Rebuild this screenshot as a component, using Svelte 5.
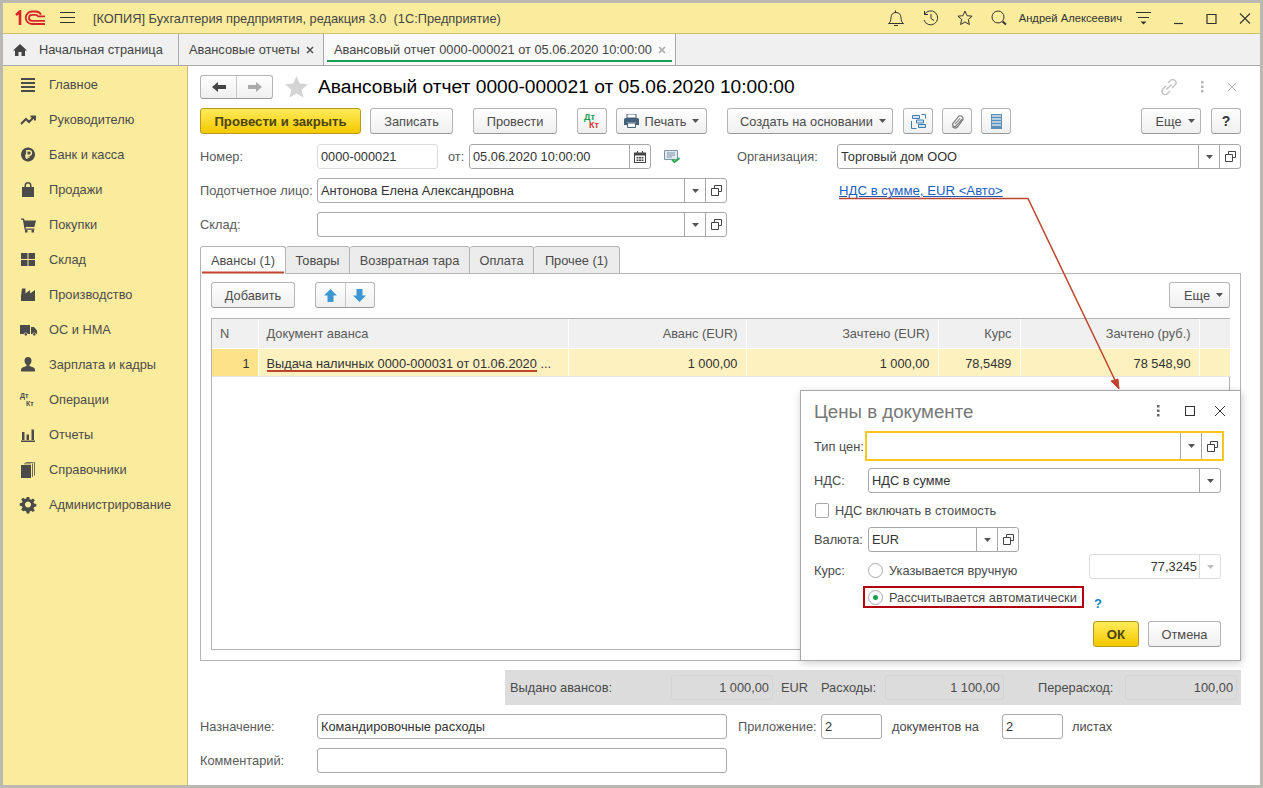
<script>
	const menu = [
		{ name: "Главное", d: "M0 1h14v2H0zM0 5h14v2H0zM0 9h14v2H0zM0 13h14v2H0z" },
		{ name: "Руководителю", s: "M0 12l5-5 3 3 5-5M9.500 4.500h4.500v4" },
		{ name: "Банк и касса", d: "M7 0.500a7 7 0 1 0 .01 0z", y: "M5.800 12V3.800h2.400a2.100 2.100 0 0 1 0 4.400H4.200M4.200 10h4.400" },
		{ name: "Продажи", d: "M1 5h2.500V3.500a3.500 3.500 0 0 1 7 0V5H13v10H1zM5 5h4V3.500a2 2 0 0 0-4 0z" },
		{ name: "Покупки", d: "M0 1.500h3l.6 2H15l-1.600 6.500H4.500l.3 1.500h8.700v1.200H3.600L1.900 2.800H0zM4 13h2.500v2.500H4zM10.500 13H13v2.500h-2.500z" },
		{ name: "Склад", d: "M0 1h6.500v6H0zM7.500 1H14v6H7.500zM0 8h6.500v6H0zM7.500 8H14v6H7.500z" },
		{ name: "Производство", d: "M1 1.500h3.500v5L9 3v3.500L14 3v11H0V9z" },
		{ name: "ОС и НМА", d: "M-1 3h10v9H6.800a2 2 0 0 0-3.900 0H-1zM10 5h3l3 3.500V12h-.8a2 2 0 0 0-3.900 0H10zM4.800 11a1.300 1.300 0 1 0 .01 0zM13.300 11a1.300 1.300 0 1 0 .01 0z" },
		{ name: "Зарплата и кадры", d: "M7 0a3.500 3.500 0 0 1 3.500 3.700c0 2-1 3.300-2 4v1.300l4 1.500c1 .4 1.500 1.200 1.500 2.500v1.500H0V13c0-1.300.5-2.100 1.500-2.500l4-1.500V7.700c-1-.7-2-2-2-4A3.500 3.500 0 0 1 7 0z" },
		{ name: "Операции", dk: true },
		{ name: "Отчеты", d: "M1 5h2.500v8H1zM5.500 7.500H8V13H5.500zM10.500 2.500H13V13h-2.500zM0 13.500h14V15H0z" },
		{ name: "Справочники", d: "M0 3h10v13H0zM11 1.500h.8V15H11zM13 0h.8v13.500H13zM3 1.500h7V2.300H3zM4.500 0h8v.8h-8z" },
		{ name: "Администрирование", d: "M5.700 0h2.600l.4 2.200 1.400.6 1.900-1.300 1.800 1.800-1.300 1.900.6 1.400 2.200.4v2.600l-2.200.4-.6 1.400 1.300 1.900-1.800 1.800-1.900-1.300-1.400.6-.4 2.200H5.700l-.4-2.200-1.400-.6L2 14.300.2 12.500l1.300-1.900-.6-1.400L-1.300 8.800V6.200l2.200-.4.6-1.400L.2 2.500 2 .7l1.900 1.300 1.400-.6zM7 4.500a3 3 0 1 0 .01 0z" }
	];

	const columns = [
		{ title: "N", width: 46, value: "1", align: "left" },
		{ title: "Документ аванса", width: 310, value: "Выдача наличных 0000-000031 от 01.06.2020 ...", align: "left" },
		{ title: "Аванс (EUR)", width: 178, value: "1 000,00", align: "right" },
		{ title: "Зачтено (EUR)", width: 192, value: "1 000,00", align: "right" },
		{ title: "Курс", width: 82, value: "78,5489", align: "right" },
		{ title: "Зачтено (руб.)", width: 179, value: "78 548,90", align: "right" },
		{ title: "", width: 31, value: "", align: "right" }
	];

	const tabs = [
		{ title: "Авансы (1)", width: 86 },
		{ title: "Товары", width: 64 },
		{ title: "Возвратная тара", width: 120 },
		{ title: "Оплата", width: 64 },
		{ title: "Прочее (1)", width: 86 }
	];
</script>

{#snippet caret()}
	<svg class="caret" width="7" height="4" viewBox="0 0 7 4"><path d="M0 0h7L3.500 4z" /></svg>
{/snippet}

{#snippet openIcon()}
	<svg width="11" height="11" viewBox="0 0 11 11" fill="none" stroke="#444"><path d="M3.500 3.500v-3h7v6h-3M.5 3.500h7v7h-7z" /></svg>
{/snippet}

{#snippet combo(width, text, drop = true, open = true)}
	<div class="field" style="width: {width}px">
		<span class="value">{text}</span>
		{#if drop}<span class="btn">{@render caret()}</span>{/if}
		{#if open}<span class="btn">{@render openIcon()}</span>{/if}
	</div>
{/snippet}

{#snippet dots(color)}
	<svg width="4" height="12" viewBox="0 0 4 12" fill={color}><rect x="1" y="0" width="2.500" height="2.500" /><rect x="1" y="4.500" width="2.500" height="2.500" /><rect x="1" y="9" width="2.500" height="2.500" /></svg>
{/snippet}

<div class="window">
	<header class="topbar">
		<svg class="logo" width="31" height="16" viewBox="0 0 31 16" fill="none" stroke="#d8232a" stroke-width="1.800">
			<path d="M1 5l4-3.500V15" stroke-width="2.600" />
			<path d="M30 14H17a6 6 0 0 1 0-12.500h4a6 6 0 0 1 5 3" />
			<path d="M30 10.800H17a3 3 0 0 1 0-6h3.500a3 3 0 0 1 2.500 1.500h7" />
		</svg>
		<svg class="burger" width="15" height="12" viewBox="0 0 15 12" stroke="#333"><path d="M0 .5h15M0 5.500h15M0 10.500h15" /></svg>
		<span class="apptitle">[КОПИЯ] Бухгалтерия предприятия, редакция 3.0&nbsp; (1С:Предприятие)</span>
		<div class="topright">
			<svg width="16" height="17" viewBox="0 0 16 17" fill="none" stroke="#333"><path d="M.5 13.500c2-1.500 2.300-3 2.500-6C3.200 4.200 5 2.500 8 2.500s4.800 1.700 5 5c.2 3 .5 4.500 2.500 6zM7.500 2.500V.5M6 15.500h4" /></svg>
			<svg width="17" height="16" viewBox="0 0 17 16" fill="none" stroke="#333"><path d="M2.500 4.500A7 7 0 1 1 2 10M2.500 1v3.500H6M9 4v4.500l3 2" /></svg>
			<svg width="16" height="16" viewBox="0 0 16 16" fill="none" stroke="#333"><path d="M8 1l2.100 4.700 5 .5-3.800 3.300 1.100 5L8 12l-4.400 2.500 1.100-5L.9 6.200l5-.5z" /></svg>
			<svg width="16" height="16" viewBox="0 0 16 16" fill="none" stroke="#333"><circle cx="7" cy="7" r="6" /><path d="M11.500 11.500l3.500 3" stroke-width="2" /></svg>
			<span class="user">Андрей Алексеевич</span>
			<svg class="usermenu" width="15" height="13" viewBox="0 0 15 13"><path d="M0 .5h15M2 5.500h11" stroke="#333" /><path d="M4.500 9.500h6L7.500 12.500z" fill="#333" /></svg>
			<div class="winbtns">
				<svg width="13" height="13" viewBox="0 0 13 13" stroke="#333" stroke-width="1.200"><path d="M2 11.500h9" /></svg>
				<svg width="13" height="13" viewBox="0 0 13 13" fill="none" stroke="#333" stroke-width="1.200"><path d="M2 2.500h9v9H2z" /></svg>
				<svg width="14" height="13" viewBox="0 0 14 13" stroke="#333" stroke-width="1.100"><path d="M2 1.500l10 10M12 1.500l-10 10" /></svg>
			</div>
		</div>
	</header>

	<nav class="opentabs">
		<div class="otab home">
			<svg width="14" height="12" viewBox="0 0 14 12" fill="#444"><path d="M7 0l7 6.500h-2V12H8.500V8h-3v4H2V6.500H0z" /></svg>
			<span>Начальная страница</span>
		</div>
		<div class="otab list">
			<span>Авансовые отчеты</span>
			<svg width="8" height="8" viewBox="0 0 8 8" stroke="#555" stroke-width="1.600"><path d="M1 1l6 6M7 1L1 7" /></svg>
		</div>
		<div class="otab doc">
			<span>Авансовый отчет 0000-000021 от 05.06.2020 10:00:00</span>
			<svg width="8" height="8" viewBox="0 0 8 8" stroke="#aaa" stroke-width="1.600"><path d="M1 1l6 6M7 1L1 7" /></svg>
		</div>
	</nav>

	<div class="body">
		<aside class="sidebar">
			{#each menu as item}
				<div class="mitem">
					<svg class="micon" width="16" height="16" viewBox="0 0 16 16">
						{#if item.dk}
							<text x="0" y="6" class="dk">Дт</text>
							<text x="6" y="14" class="dk">Кт</text>
						{/if}
						{#if item.d}<path d={item.d} fill="#4a4a4a" fill-rule="evenodd" transform="translate(1 0)" />{/if}
						{#if item.s}<path d={item.s} fill="none" stroke="#4a4a4a" stroke-width="2" transform="translate(1 0)" />{/if}
						{#if item.y}<path d={item.y} fill="none" stroke="#fbec9d" stroke-width="1.400" transform="translate(1 0)" />{/if}
					</svg>
					<span>{item.name}</span>
				</div>
			{/each}
		</aside>

		<main class="content">
			<div class="headrow">
				<div class="navgroup">
					<span class="navbtn">
						<svg width="14" height="10" viewBox="0 0 14 10" fill="#444"><path d="M0 5l6-5v3h8v4H6v3z" /></svg>
					</span>
					<span class="navbtn">
						<svg width="14" height="10" viewBox="0 0 14 10" fill="#aaa"><path d="M14 5L8 0v3H0v4h8v3z" /></svg>
					</span>
				</div>
				<svg class="star" width="23" height="22" viewBox="0 0 23 22" fill="#d4d4d4"><path d="M11.500 0l3.200 7.600 8.300.7-6.300 5.400 1.900 8.100-7.100-4.300-7.100 4.300 1.900-8.100L0 8.300l8.300-.7z" /></svg>
				<h1>Авансовый отчет 0000-000021 от 05.06.2020 10:00:00</h1>
				<div class="headtools">
					<svg width="16" height="16" viewBox="0 0 16 16" fill="none" stroke="#c4c4c4" stroke-width="1.500"><path d="M7 4l2.500-2.500a3 3 0 0 1 4.500 4.500L11 9M9 12l-2.500 2.500A3 3 0 0 1 2 10l3-3M5.500 10.500l5-5" /></svg>
					{@render dots("#b5b5b5")}
					<svg width="10" height="10" viewBox="0 0 10 10" stroke="#b5b5b5"><path d="M1 1l8 8M9 1l-8 8" /></svg>
				</div>
			</div>

			<div class="actions">
				<button class="primary w-post">Провести и закрыть</button>
				<button class="w-save">Записать</button>
				<button class="w-run">Провести</button>
				<button class="w-dk">
					<span class="dkgreen">Дт</span><span class="dkred">Кт</span>
				</button>
				<button class="w-print">
					<svg width="15" height="14" viewBox="0 0 15 14"><path d="M3 0h9v4H3z" fill="#fff" stroke="#44607a" /><path d="M1.500 4h12A1.500 1.500 0 0 1 15 5.500V11h-3V8.500H3V11H0V5.500A1.500 1.500 0 0 1 1.500 4z" fill="#44607a" /><path d="M3.500 9h8v4.500h-8z" fill="#fff" stroke="#44607a" /></svg>
					Печать {@render caret()}
				</button>
				<button class="w-create">Создать на основании {@render caret()}</button>
				<button class="w-icon first">
					<svg width="15" height="15" viewBox="0 0 15 15" fill="#cfe3f2" stroke="#3f7fae"><path d="M1.500 1.500h7v3h-7zM5.500 6h7v3h-7zM7.500 10.500h7v3h-7z" /><path d="M.5 7v7.500h5M10.500 .5h4v4" fill="none" /></svg>
				</button>
				<button class="w-icon">
					<svg width="13" height="15" viewBox="0 0 13 15" fill="none" stroke="#777" stroke-width="1.100"><path d="M11 5L5 12a2 2 0 0 1-3-2.600L8 2a3 3 0 0 1 4 3.400L6.500 13a4 4 0 0 1-5.500-.5M9 4.500L4 10" /></svg>
				</button>
				<button class="w-icon">
					<svg width="11" height="15" viewBox="0 0 11 15"><path d="M0 0h11v15H0z" fill="#5f8fb4" /><path d="M1 2h9M1 5h9M1 8h9M1 11h9" stroke="#cfe3f2" stroke-width="1.500" /></svg>
				</button>
				<button class="w-more push">Еще {@render caret()}</button>
				<button class="w-icon first help">?</button>
			</div>

			<div class="row">
				<label class="lbl">Номер:</label>
				<div class="field pale num"><span class="value">0000-000021</span></div>
				<label class="from">от:</label>
				<div class="field date">
					<span class="value">05.06.2020 10:00:00</span>
					<span class="btn wide">
						<svg width="12" height="12" viewBox="0 0 12 12"><path d="M0 1.500h12V12H0z" fill="#444" /><path d="M1 4.500h10V11H1z" fill="#fff" /><path d="M2.500 6h2v1.500h-2zM5 6h2v1.500H5zM7.500 6h2v1.500h-2zM2.500 8.500h2V10h-2zM5 8.500h2V10H5zM7.500 8.500h2V10h-2zM3 0h1v2H3zM8 0h1v2H8z" fill="#444" /></svg>
					</span>
				</div>
				<svg class="posted" width="16" height="13" viewBox="0 0 16 13" fill="none"><path d="M.5.5h13v9H.5z" fill="#dfe8ee" stroke="#7c97a8" /><path d="M3 3h8M3 5h8M3 7h5" stroke="#7c97a8" /><path d="M8 9.500l2.500 2.500 5-4" stroke="#2ba84a" stroke-width="2" /></svg>
				<label class="org">Организация:</label>
				{@render combo(404, "Торговый дом ООО")}
			</div>

			<div class="row">
				<label class="lbl">Подотчетное лицо:</label>
				{@render combo(410, "Антонова Елена Александровна")}
				<a class="vat" href="#vat">НДС в сумме, EUR &lt;Авто&gt;</a>
			</div>

			<div class="row">
				<label class="lbl">Склад:</label>
				{@render combo(410, "")}
			</div>

			<div class="tabs">
				{#each tabs as tab, i}
					<div class="tab" class:active={i === 0} style="width: {tab.width}px">{tab.title}</div>
				{/each}
			</div>

			<section class="panel">
				<div class="paneltools">
					<button class="w-add">Добавить</button>
					<div class="updown">
						<span>
							<svg width="13" height="13" viewBox="0 0 13 13" fill="#3d97d3"><path d="M6.500 0L13 6.500H9.500V13h-6V6.500H0z" /></svg>
						</span>
						<span>
							<svg width="13" height="13" viewBox="0 0 13 13" fill="#3d97d3"><path d="M6.500 13L13 6.500H9.500V0h-6v6.500H0z" /></svg>
						</span>
					</div>
					<button class="w-more2 push">Еще {@render caret()}</button>
				</div>
				<div class="grid">
					<table>
						<colgroup>
							{#each columns as col}<col style="width: {col.width}px" />{/each}
						</colgroup>
						<thead>
							<tr>
								{#each columns as col}<th class={col.align}>{col.title}</th>{/each}
							</tr>
						</thead>
						<tbody>
							<tr>
								{#each columns as col, i}<td class={col.align} class:current={i === 0}>{col.value}</td>{/each}
							</tr>
						</tbody>
					</table>
				</div>
			</section>

			<div class="totals">
				<span class="t1">Выдано авансов:</span>
				<span class="tbox b1">1 000,00</span>
				<span class="t2">EUR</span>
				<span class="t3">Расходы:</span>
				<span class="tbox b2">1 100,00</span>
				<span class="t4">Перерасход:</span>
				<span class="tbox b3">100,00</span>
			</div>

			<div class="row purpose">
				<label class="lbl">Назначение:</label>
				{@render combo(410, "Командировочные расходы", false, false)}
				<label class="attach">Приложение:</label>
				{@render combo(61, "2", false, false)}
				<label class="docs">документов на</label>
				{@render combo(61, "2", false, false)}
				<label class="sheets">листах</label>
			</div>

			<div class="row">
				<label class="lbl">Комментарий:</label>
				{@render combo(410, "", false, false)}
			</div>
		</main>
	</div>

	<!-- annotations drawn over the screenshot -->
	<svg class="marks" width="1263" height="788" viewBox="0 0 1263 788" fill="none" stroke="#c0452d">
		<path d="M202 272.500h82" stroke-width="2" />
		<path d="M267 371h270" stroke-width="2" />
		<path d="M839 198.500h189l90 188" stroke-width="1.500" />
		<path d="M1119 389l-8-8 7-2z" fill="#c0452d" />
	</svg>

	<div class="dialog">
		<div class="dlghead">
			<h2>Цены в документе</h2>
			<div class="dlgtools">
				{@render dots("#666")}
				<svg width="10" height="10" viewBox="0 0 10 10" fill="none" stroke="#333" stroke-width="1.100"><path d="M.5.5h9v9h-9z" /></svg>
				<svg class="dlgclose" width="12" height="12" viewBox="0 0 12 12" stroke="#333"><path d="M1 1l10 10M11 1L1 11" /></svg>
			</div>
		</div>
		<div class="dlgrow first">
			<label class="dlbl">Тип цен:</label>
			<div class="focus">{@render combo(355, "")}</div>
		</div>
		<div class="dlgrow">
			<label class="dlbl">НДС:</label>
			<div class="vatfield">{@render combo(353, "НДС в сумме", true, false)}</div>
		</div>
		<div class="check">
			<span class="box"></span>
			<span>НДС включать в стоимость</span>
		</div>
		<div class="dlgrow">
			<label class="dlbl">Валюта:</label>
			{@render combo(151, "EUR")}
		</div>
		<div class="rate">
			<label class="dlbl">Курс:</label>
			<div class="radios">
				<div class="radio one"><span class="dot"></span>Указывается вручную</div>
				<div class="radio two"><span class="dot on"></span>Рассчитывается автоматически</div>
			</div>
			<div class="rateright">
				<div class="field pale ratefield">
					<span class="value r">77,3245</span>
					<span class="btn">{@render caret()}</span>
				</div>
				<span class="q">?</span>
			</div>
		</div>
		<div class="dlgbtns">
			<button class="primary ok">ОК</button>
			<button class="cancel">Отмена</button>
		</div>
	</div>
</div>

<style>
	:global(body)
	{
		margin: 0;
		background: #b8b8b8;
	}

	.window
	{
		position: relative;
		box-sizing: border-box;
		width: 1263px;
		height: 788px;
		border: 3px solid #b9b9b2;
		display: flex;
		flex-direction: column;
		overflow: hidden;
		font-family: "Liberation Sans", Arial, sans-serif;
		font-size: 12.8px;
		color: #4b4b4b;
		background: #fff;
	}

	.topbar
	{
		flex: none;
		height: 30px;
		display: flex;
		align-items: center;
		background: #fbec9d;
		border-bottom: 1px solid #cdbf70;
	}

	.logo { margin-left: 12px; }
	.burger { margin-left: 14px; }

	.apptitle
	{
		margin-left: 18px;
		color: #444;
	}

	.topright
	{
		margin-left: auto;
		display: flex;
		align-items: center;
		gap: 18px;
		padding-right: 8px;
	}

	.user
	{
		margin-left: -6px;
		font-size: 11.2px;
		color: #333;
	}

	.usermenu { margin-left: -4px; }

	.winbtns
	{
		display: flex;
		align-items: center;
		gap: 20px;
		margin-left: 3px;
	}

	.opentabs
	{
		flex: none;
		height: 31px;
		display: flex;
		background: #f0f0f0;
		border-bottom: 1px solid #a9a9a9;
	}

	.otab
	{
		box-sizing: border-box;
		display: flex;
		align-items: center;
		gap: 6px;
		border-right: 1px solid #a9a9a9;
		color: #444;
		position: relative;
	}

	.home { width: 176px; padding-left: 10px; gap: 12px; }
	.list { width: 145px; padding-left: 10px; }
	.doc
	{
		width: 352px;
		padding-left: 10px;
		background: #fafafa;
	}

	.doc::after
	{
		content: "";
		position: absolute;
		left: 3px;
		right: 3px;
		bottom: 3px;
		height: 2px;
		background: #14a04f;
	}

	.body
	{
		flex: 1;
		display: flex;
		min-height: 0;
	}

	.sidebar
	{
		flex: none;
		box-sizing: border-box;
		width: 185px;
		background: #fbec9d;
		border-right: 1px solid #c9c07e;
		padding-top: 1px;
	}

	.mitem
	{
		height: 35px;
		display: flex;
		align-items: center;
		gap: 12px;
		padding-left: 17px;
		color: #4b4b4b;
	}

	.micon { overflow: visible; flex: none; margin-right: 1px; }

	.dk
	{
		font-size: 7px;
		font-weight: bold;
		fill: #4a4a4a;
	}

	.content
	{
		flex: 1;
		min-width: 0;
		padding: 9px 19px 0 12px;
	}

	.headrow
	{
		height: 24px;
		display: flex;
		align-items: center;
	}

	.navgroup, .updown
	{
		display: flex;
		border: 1px solid #b4b4b4;
		border-bottom-color: #9a9a9a;
		border-radius: 3px;
		background: linear-gradient(#fff, #efefef);
	}

	.navbtn
	{
		width: 35px;
		height: 22px;
		display: flex;
		align-items: center;
		justify-content: center;
	}

	.navbtn + .navbtn { border-left: 1px solid #c8c8c8; }

	.star { margin-left: 12px; }

	h1
	{
		margin: 0 0 0 10px;
		font-size: 19.2px;
		font-weight: normal;
		color: #000;
	}

	.headtools
	{
		margin-left: auto;
		display: flex;
		align-items: center;
		gap: 23px;
		padding-right: 4px;
	}

	.actions
	{
		margin-top: 9px;
		display: flex;
		height: 26px;
	}

	button
	{
		box-sizing: border-box;
		height: 26px;
		padding: 0;
		display: inline-flex;
		align-items: center;
		justify-content: center;
		gap: 6px;
		border: 1px solid #b4b4b4;
		border-bottom-color: #9a9a9a;
		border-radius: 3px;
		background: linear-gradient(#fff, #efefef);
		font-family: inherit;
		font-size: 12.8px;
		color: #4b4b4b;
	}

	button.primary
	{
		border-color: #b59a22;
		background: linear-gradient(#ffec5a, #f4c800);
		font-weight: bold;
		font-size: 13.2px;
		color: #4b4310;
	}

	.caret { fill: #555; }

	.w-post { width: 161px; }
	.w-save { width: 83px; margin-left: 9px; }
	.w-run { width: 84px; margin-left: 20px; }
	.w-dk
	{
		width: 30px;
		margin-left: 20px;
		flex-direction: column;
		align-items: flex-start;
		gap: 0;
		font-size: 9px;
		font-weight: bold;
		line-height: 8px;
		padding-left: 6px;
	}
	.dkgreen { color: #14a04f; }
	.dkred { color: #d8332a; margin-left: 5px; }
	.w-print { width: 91px; margin-left: 9px; }
	.w-create { width: 166px; margin-left: 20px; padding-left: 6px; }
	.w-icon { width: 30px; margin-left: 9px; }
	.w-icon.first { margin-left: 10px; }
	.w-more { width: 60px; padding-left: 8px; }
	.push { margin-left: auto; }
	.help
	{
		font-size: 14px;
		font-weight: bold;
		color: #333;
	}

	.row
	{
		display: flex;
		align-items: center;
		height: 25px;
		margin-bottom: 9px;
	}

	.actions + .row { margin-top: 10px; }

	.lbl
	{
		flex: none;
		width: 117px;
		color: #5a5a5a;
		white-space: nowrap;
	}

	.field
	{
		flex: none;
		box-sizing: border-box;
		height: 25px;
		display: flex;
		align-items: stretch;
		border: 1px solid #a8a8a8;
		border-radius: 3px;
		background: #fff;
		color: #333;
	}

	.field.pale { border-color: #dcdcdc; }

	.value
	{
		flex: 1;
		min-width: 0;
		padding-left: 3px;
		line-height: 23px;
		white-space: nowrap;
	}

	.value.r
	{
		text-align: right;
		padding-right: 2px;
	}

	.btn
	{
		flex: none;
		width: 20px;
		display: flex;
		align-items: center;
		justify-content: center;
		border-left: 1px solid #a8a8a8;
	}

	.btn.wide { width: 20px; }

	.num { width: 121px; }
	.from { margin-left: 10px; width: 21px; color: #5a5a5a; }
	.date { width: 182px; }
	.posted { margin-left: 13px; }
	.org { margin-left: 57px; width: 100px; color: #5a5a5a; }

	.vat
	{
		margin-left: 112px;
		font-size: 13.2px;
		color: #1b5fbf;
		text-decoration: underline;
	}

	.tabs
	{
		display: flex;
		height: 28px;
	}

	.tab
	{
		box-sizing: border-box;
		display: flex;
		align-items: center;
		justify-content: center;
		background: #ececec;
		border: 1px solid #b4b4b4;
		border-left: none;
		border-radius: 3px 3px 0 0;
		color: #4b4b4b;
		height: 28px;
	}

	.tab.active
	{
		background: #fff;
		border-left: 1px solid #b4b4b4;
		border-bottom: none;
	}

	.panel
	{
		box-sizing: border-box;
		height: 388px;
		margin-top: -1px;
		padding: 8px 10px 10px;
		border: 1px solid #b4b4b4;
		display: flex;
		flex-direction: column;
	}

	.paneltools
	{
		display: flex;
		height: 26px;
		flex: none;
		margin-bottom: 10px;
	}

	.w-add { width: 84px; }

	.updown
	{
		box-sizing: border-box;
		width: 60px;
		height: 26px;
		margin-left: 20px;
	}

	.updown span
	{
		flex: 1;
		display: flex;
		align-items: center;
		justify-content: center;
	}

	.updown span + span { border-left: 1px solid #c8c8c8; }

	.w-more2 { width: 61px; padding-left: 8px; }

	.grid
	{
		flex: 1;
		border: 1px solid #b4b4b4;
		min-height: 0;
	}

	table
	{
		width: 100%;
		table-layout: fixed;
		border-collapse: collapse;
	}

	th
	{
		height: 29px;
		padding: 0 8px;
		background: #f0f0f0;
		border-right: 1px solid #fff;
		border-bottom: 1px solid #fff;
		font-weight: normal;
		color: #5a5a5a;
		white-space: nowrap;
	}

	td
	{
		height: 26px;
		padding: 1px 8px 0;
		background: #fdf1c0;
		border-right: 1px solid #fff;
		border-bottom: 1px solid #e4e4e4;
		color: #333;
		white-space: nowrap;
		overflow: hidden;
	}

	td.current
	{
		background: #fde28a;
		text-align: right;
	}

	.left { text-align: left; }
	.right { text-align: right; }

	.totals
	{
		box-sizing: border-box;
		height: 35px;
		margin: 9px 0 9px 305px;
		padding: 5px 4px 5px 5px;
		display: flex;
		align-items: center;
		background: #dcdcdc;
		color: #4b4b4b;
	}

	.tbox
	{
		box-sizing: border-box;
		height: 25px;
		line-height: 23px;
		padding-right: 3px;
		border: 1px solid #d4d4d4;
		border-radius: 3px;
		text-align: right;
	}

	.t1 { width: 161px; }
	.b1 { width: 102px; }
	.t2 { margin-left: 8px; width: 40px; }
	.t3 { width: 64px; }
	.b2 { width: 119px; }
	.t4 { margin-left: 34px; width: 87px; white-space: nowrap; }
	.b3 { width: 112px; }

	.attach { margin-left: 11px; width: 83px; color: #5a5a5a; white-space: nowrap; }
	.docs { margin-left: 10px; width: 110px; }
	.sheets { margin-left: 9px; }

	.marks
	{
		position: absolute;
		left: -3px;
		top: -3px;
		pointer-events: none;
	}

	.dialog
	{
		position: absolute;
		left: 797px;
		top: 387px;
		box-sizing: border-box;
		width: 441px;
		height: 271px;
		padding: 0 19px 0 13px;
		background: #fff;
		border: 1px solid #a8a8a8;
		box-shadow: 1px 2px 8px #0003;
	}

	.dlghead
	{
		height: 40px;
		display: flex;
		align-items: center;
		margin-right: -5px;
	}

	h2
	{
		margin: 2px 0 0;
		font-size: 18.7px;
		font-weight: normal;
		color: #777;
	}

	.dlgtools
	{
		margin-left: auto;
		display: flex;
		align-items: center;
		gap: 25px;
	}

	.dlgclose { margin-left: -6px; }

	.dlgrow
	{
		display: flex;
		align-items: center;
		height: 25px;
		margin-bottom: 10px;
	}

	.dlgrow.first { height: 30px; margin-bottom: 7px; }

	.dlbl
	{
		flex: none;
		width: 54px;
		color: #4b4b4b;
		white-space: nowrap;
	}

	.first .dlbl { width: 51px; }

	.focus
	{
		flex: none;
		border: 2px solid #fbc71f;
		margin-right: -6px;
	}

	.focus .field
	{
		border: none;
		height: 26px;
	}

	.check
	{
		display: flex;
		align-items: center;
		gap: 6px;
		height: 16px;
		margin: -1px 0 9px 1px;
	}

	.box
	{
		box-sizing: border-box;
		width: 14px;
		height: 15px;
		border: 1px solid #a8a8a8;
		border-radius: 2px;
	}

	.rate
	{
		display: flex;
		margin-top: 9px;
	}

	.rate .dlbl { padding-top: 1px; }

	.radios
	{
		flex: none;
		width: 221px;
		margin-left: -5px;
	}

	.radio
	{
		box-sizing: border-box;
		display: flex;
		align-items: center;
		gap: 6px;
		height: 22px;
		padding-left: 5px;
		white-space: nowrap;
	}

	.radio.one { height: 16px; margin-bottom: 8px; }

	.radio.two { border: 2px solid #b3000f; padding-left: 3px; }

	.dot
	{
		box-sizing: border-box;
		flex: none;
		width: 15px;
		height: 15px;
		border: 1px solid #a8a8a8;
		border-radius: 50%;
		display: flex;
		align-items: center;
		justify-content: center;
	}

	.dot.on::after
	{
		content: "";
		width: 5px;
		height: 5px;
		border-radius: 50%;
		background: #14a04f;
	}

	.rateright
	{
		margin-left: 5px;
		margin-top: -8px;
	}

	.ratefield { width: 132px; }
	.ratefield .btn { border-left-color: #dcdcdc; }
	.ratefield .caret { fill: #bbb; }

	.q
	{
		display: block;
		margin: 17px 0 0 5px;
		font-size: 13px;
		font-weight: bold;
		color: #1580c0;
	}

	.dlgbtns
	{
		display: flex;
		justify-content: flex-end;
		gap: 9px;
	}

	.rate + .dlgbtns { margin-top: 10px; }

	.ok { width: 46px; }
	.cancel { width: 73px; }
</style>
